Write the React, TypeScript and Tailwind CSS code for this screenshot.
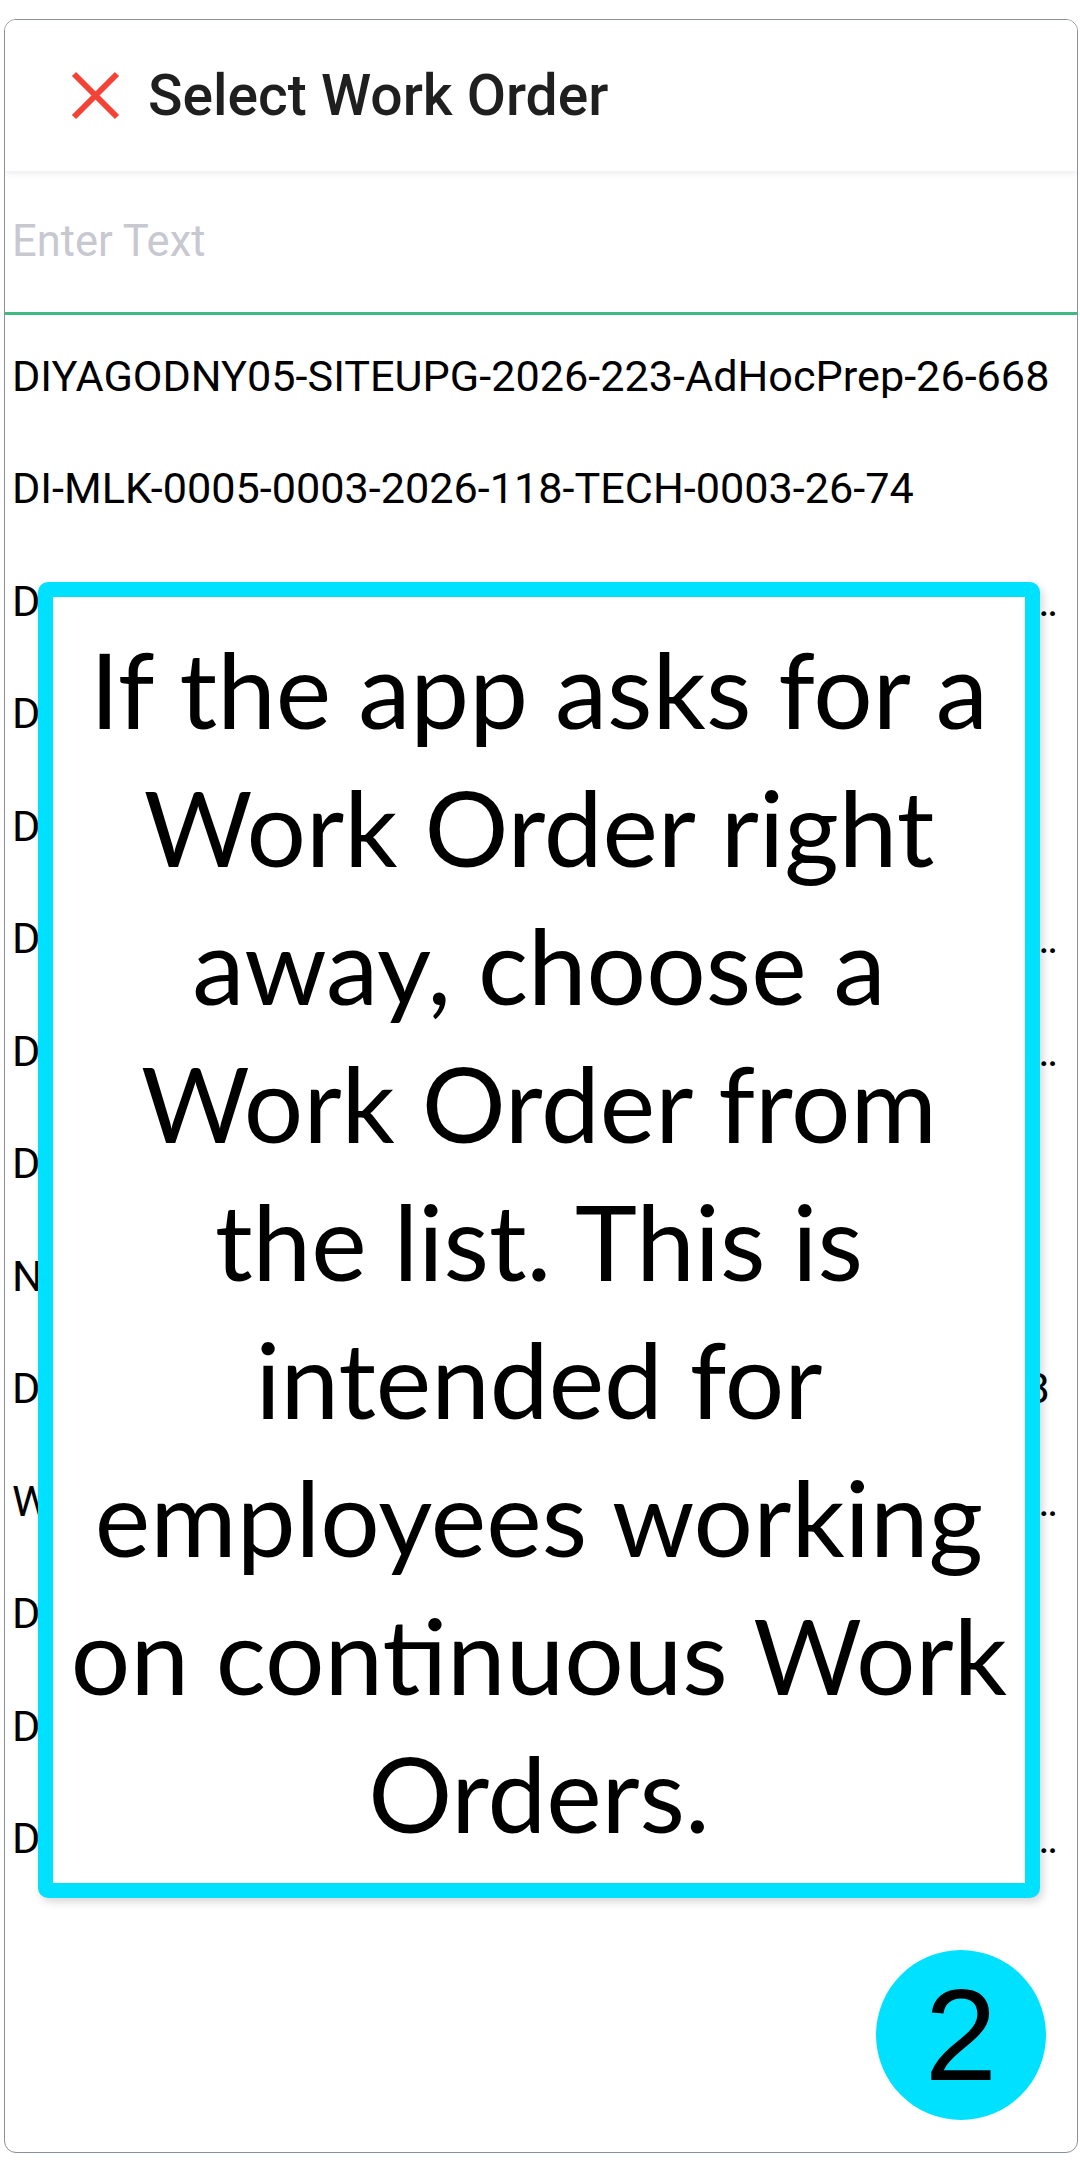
const rows = [
  { text: "DIYAGODNY05-SITEUPG-2026-223-AdHocPrep-26-668" },
  { text: "DI-MLK-0005-0003-2026-118-TECH-0003-26-74" },
  { text: "DIYAGODNY05-SITEUPG-2026-231-AdHocPrep-26-1042-Extra", cut: true },
  { text: "DI-MLK-0005-0003-2026-121-TECH-0003-26-81" },
  { text: "DI-MLK-0005-0003-2026-119-TECH-0003-26-77" },
  { text: "DIYAGODNY05-SITEUPG-2026-240-AdHocPrep-26-1107", cut: true },
  { text: "DIYAGODNY05-SITEUPG-2026-241-AdHocPrep-26-1108", cut: true },
  { text: "DI-MLK-0005-0003-2026-125-TECH-0003-26-90" },
  { text: "NY-BRX-0012-0001-2026-087-MAINT-0001-26-12" },
  { text: "DIYAGODNY05-SITEUPG-2026-226-AdHocPrep-26-668" },
  { text: "WO-DIYAGODNY05-SITEUPG-2026-250-AdHocPrep-26-1201", cut: true },
  { text: "DI-MLK-0005-0003-2026-130-TECH-0003-26-95" },
  { text: "DI-MLK-0005-0004-2026-131-TECH-0004-26-96" },
  { text: "DIYAGODNY05-SITEUPG-2026-260-AdHocPrep-26-1250", cut: true },
];

const calloutLines = [
  "If the app asks for a",
  "Work Order right",
  "away, choose a",
  "Work Order from",
  "the list. This is",
  "intended for",
  "employees working",
  "on continuous Work",
  "Orders.",
];

function CloseIcon() {
  return (
    <svg width="49" height="49" viewBox="0 0 49 49" fill="none">
      <path d="M3 3 L46 46 M46 3 L3 46" stroke="#f44336" strokeWidth="6" />
    </svg>
  );
}

export default function App() {
  return (
    <div className="min-h-screen bg-white font-['Roboto',sans-serif]">
      <div className="pt-[19px] pl-[4px]">
        <div className="relative w-[1074px] h-[2134px] overflow-hidden rounded-[12px] border border-[#8a9099] bg-white">
          {/* header */}
          <div className="relative z-10 flex h-[151px] items-center gap-[28px] bg-white pl-[66px] shadow-[0_3px_6px_rgba(0,0,0,0.07)]">
            <CloseIcon />
            <span className="text-[57px] font-medium leading-none text-[#1f1f1f]">
              Select Work Order
            </span>
          </div>

          {/* search */}
          <div className="flex h-[144px] items-center border-b-[3px] border-[#3dbb80] pl-[7px]">
            <span className="text-[43.5px] leading-none text-[#c8c8d0]">Enter Text</span>
          </div>

          {/* list */}
          <div className="flex flex-col pt-[5px]">
            {rows.map((row) => (
              <div
                key={row.text}
                className="flex h-[112.5px] items-center pl-[7px] pr-[19px] text-[43.2px] leading-none text-black"
              >
                {row.cut ? (
                  <>
                    <span className="min-w-0 flex-1 overflow-hidden whitespace-nowrap">{row.text}</span>
                    <span className="shrink-0">…</span>
                  </>
                ) : (
                  <span className="truncate">{row.text}</span>
                )}
              </div>
            ))}
          </div>

          {/* tutorial callout */}
          <div className="absolute left-[33px] top-[562px] flex h-[1316px] w-[1002px] flex-col items-center justify-center rounded-[10px] border-[15px] border-[#00e1ff] bg-white shadow-[3px_4px_8px_rgba(0,0,0,0.16)]">
            <div className="flex flex-col items-center font-['Lato',sans-serif] text-[105px] leading-[138px] text-black">
              {calloutLines.map((line) => (
                <span key={line} className="whitespace-nowrap">
                  {line}
                </span>
              ))}
            </div>
          </div>

          {/* step badge */}
          <div className="absolute left-[871px] top-[1930px] flex h-[170px] w-[170px] items-center justify-center rounded-full bg-[#00e1ff]">
            <span className="font-['Liberation_Sans',sans-serif] text-[130px] leading-none text-black">
              2
            </span>
          </div>
        </div>
      </div>
    </div>
  );
}
